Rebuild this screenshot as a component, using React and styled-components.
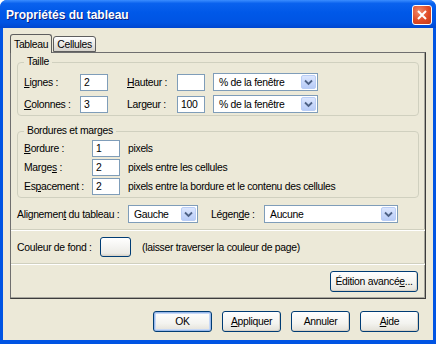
import React from 'react';
import styled, { createGlobalStyle } from 'styled-components';

const GlobalStyle = createGlobalStyle`
  html, body { margin: 0; padding: 0; background: #ffffff; }
  body {
    font-family: "Liberation Sans", Arial, sans-serif;
    font-size: 10.4px;
    letter-spacing: -0.3px;
    color: #000;
  }
  * { box-sizing: border-box; }
`;

const Window = styled.div`
  width: 436px;
  height: 344px;
  display: flex;
  flex-direction: column;
  background: #0054e3;
  padding: 0 3px 4px 3px;
  border-radius: 7px 7px 0 0;
  overflow: hidden;
`;

const TitleBar = styled.div`
  height: 28px;
  margin: 0 -3px;
  padding: 1px 4px 0 6px;
  display: flex;
  align-items: center;
  justify-content: space-between;
  background: linear-gradient(to bottom, #3b8dff 0%, #0a62ee 12%, #0058e8 45%, #0054e3 80%, #0047d0 100%);
`;

const Title = styled.span`
  color: #fff;
  font-family: "Liberation Sans", Arial, sans-serif;
  font-weight: bold;
  font-size: 12px;
  letter-spacing: 0;
  text-shadow: 1px 1px 0 #0a1f80;
`;

const CloseButton = styled.div`
  width: 20px;
  height: 20px;
  border: 1px solid #fff;
  border-radius: 3px;
  background: radial-gradient(circle at 35% 30%, #f28a6c 0%, #e04a26 55%, #c23a18 100%);
  display: flex;
  align-items: center;
  justify-content: center;
`;

const Body = styled.div`
  flex: 1;
  background: #ece9d8;
  display: flex;
  flex-direction: column;
  padding: 6px 8px 0 7px;
`;

const Tabs = styled.div`
  display: flex;
  align-items: flex-end;
  height: 18px;
  position: relative;
  z-index: 1;
`;

const Tab = styled.div`
  height: ${p => (p.active ? '19px' : '16px')};
  padding: 0 3px;
  margin-right: ${p => (p.active ? '1px' : '0')};
  margin-bottom: ${p => (p.active ? '-1px' : '0')};
  display: flex;
  align-items: center;
  border: 1px solid #5e5e5e;
  border-bottom: ${p => (p.active ? 'none' : '1px solid #5e5e5e')};
  border-radius: 3px 3px 0 0;
  background: ${p => (p.active ? '#ece9d8' : 'linear-gradient(#ffffff, #d6d3cc)')};
`;

const Panel = styled.div`
  width: 416px;
  height: 247px;
  border: 1px solid #6f6f6f;
  border-right-color: #3c3c3c;
  border-bottom-color: #3c3c3c;
  box-shadow: inset -1px -1px 0 #a8a79e;
  padding: 3px 6px 0 6px;
  display: flex;
  flex-direction: column;
`;

const Group = styled.fieldset`
  margin: ${p => p.mt || 0}px 0 0 0;
  padding: 0 0 2px 6px;
  min-inline-size: 0;
  border: 1px solid #d0d0bf;
  border-radius: 4px;
  width: 402px;
`;

const Legend = styled.legend`
  padding: 0 3px;
  margin-left: 0;
  height: 12px;
  line-height: 12px;
`;

const SizeGrid = styled.div`
  display: grid;
  grid-template-columns: 56px 28px 19px 50px 28px 8px 105px;
  grid-auto-rows: 18px;
  row-gap: 4px;
  align-items: center;
  padding-top: 5px;
`;

const BorderGrid = styled.div`
  display: grid;
  grid-template-columns: 68px 28px 8px auto;
  grid-auto-rows: 17px;
  row-gap: 2px;
  align-items: center;
  padding-top: 3px;
`;

const Label = styled.span`
  white-space: nowrap;
`;

const Acc = styled.span`
  text-decoration: underline;
`;

const TextBox = styled.div`
  width: ${p => p.w || 28}px;
  height: 17px;
  background: #fff;
  border: 1px solid #7f9db9;
  padding: 0 3px;
  display: flex;
  align-items: center;
`;

const Select = styled.div`
  width: ${p => p.w}px;
  height: 18px;
  background: #fff;
  border: 1px solid #7f9db9;
  display: flex;
  align-items: center;
  justify-content: space-between;
  padding: 1px 1px 1px 5px;
`;

const DropButton = styled.div`
  width: 15px;
  height: 14px;
  border-radius: 2px;
  border: 1px solid #b9cdf5;
  background: linear-gradient(#dbe6fe, #b7cbf7);
  display: flex;
  align-items: center;
  justify-content: center;
`;

const InlineRow = styled.div`
  display: flex;
  align-items: center;
  height: ${p => p.h || 20}px;
`;

const Separator = styled.div`
  height: 2px;
  margin: 0 -6px;
  border-top: 1px solid #d0d0bf;
  border-bottom: 1px solid #ffffff;
`;

const ColorButton = styled.div`
  width: 31px;
  height: 20px;
  border: 1px solid #003c74;
  border-radius: 3px;
  background: linear-gradient(#ffffff, #ecebe6 85%, #d6d0c5);
`;

const Button = styled.div`
  width: ${p => p.w || 59}px;
  height: 21px;
  border: 1px solid #003c74;
  border-radius: 3px;
  background: linear-gradient(#ffffff, #f3f3ef 60%, #e3e1d8 100%);
  box-shadow: ${p => (p.primary ? 'inset 0 0 0 1px #98b8ea, inset 0 0 0 2px #c6d8f6' : 'inset -1px -1px 0 #d6d0c5')};
  display: flex;
  align-items: center;
  justify-content: center;
`;

const Footer = styled.div`
  display: flex;
  justify-content: flex-end;
  gap: 10px;
  padding-top: 12px;
  padding-right: 6px;
`;

const Chevron = () => (
  <svg width="9" height="7" viewBox="0 0 9 7">
    <path d="M1 1.5 L4.5 5 L8 1.5" fill="none" stroke="#4d6185" strokeWidth="1.8" />
  </svg>
);

const Dropdown = ({ w, value }) => (
  <Select w={w}>
    <span>{value}</span>
    <DropButton>
      <Chevron />
    </DropButton>
  </Select>
);

export default function App() {
  return (
    <>
      <GlobalStyle />
      <Window>
        <TitleBar>
          <Title>Propriétés du tableau</Title>
          <CloseButton>
            <svg width="12" height="12" viewBox="0 0 12 12">
              <path d="M2 2 L10 10 M10 2 L2 10" stroke="#fff" strokeWidth="2" />
            </svg>
          </CloseButton>
        </TitleBar>
        <Body>
          <Tabs>
            <Tab active>Tableau</Tab>
            <Tab>Cellules</Tab>
          </Tabs>
          <Panel>
            <Group>
              <Legend>Taille</Legend>
              <SizeGrid>
                <Label><Acc>L</Acc>ignes :</Label>
                <TextBox>2</TextBox>
                <span />
                <Label><Acc>H</Acc>auteur :</Label>
                <TextBox />
                <span />
                <Dropdown w={105} value="% de la fenêtre" />
                <Label><Acc>C</Acc>olonnes :</Label>
                <TextBox>3</TextBox>
                <span />
                <Label>Lar<Acc>g</Acc>eur :</Label>
                <TextBox>100</TextBox>
                <span />
                <Dropdown w={105} value="% de la fenêtre" />
              </SizeGrid>
            </Group>
            <Group mt={9}>
              <Legend>Bordures et marges</Legend>
              <BorderGrid>
                <Label><Acc>B</Acc>ordure :</Label>
                <TextBox>1</TextBox>
                <span />
                <Label>pixels</Label>
                <Label>Marge<Acc>s</Acc> :</Label>
                <TextBox>2</TextBox>
                <span />
                <Label>pixels entre les cellules</Label>
                <Label>Es<Acc>p</Acc>acement :</Label>
                <TextBox>2</TextBox>
                <span />
                <Label>pixels entre la bordure et le contenu des cellules</Label>
              </BorderGrid>
            </Group>
            <InlineRow style={{ marginTop: 6, marginBottom: 5 }}>
              <Label style={{ width: 111 }}>Alignemen<Acc>t</Acc> du tableau :</Label>
              <Dropdown w={70} value="Gauche" />
              <Label style={{ marginLeft: 13, width: 53 }}>Légen<Acc>d</Acc>e :</Label>
              <Dropdown w={134} value="Aucune" />
            </InlineRow>
            <Separator />
            <InlineRow h={32}>
              <Label style={{ width: 83 }}>Couleur de fond :</Label>
              <ColorButton />
              <Label style={{ marginLeft: 11 }}>(laisser traverser la couleur de page)</Label>
            </InlineRow>
            <Separator />
            <InlineRow h={27} style={{ justifyContent: 'flex-end', alignItems: 'flex-end', paddingRight: 1 }}>
              <Button w={88}>Édition avancé<Acc>e</Acc>...</Button>
            </InlineRow>
          </Panel>
          <Footer>
            <Button primary>OK</Button>
            <Button><Acc>A</Acc>ppliquer</Button>
            <Button>Annuler</Button>
            <Button><Acc>A</Acc>ide</Button>
          </Footer>
        </Body>
      </Window>
    </>
  );
}
